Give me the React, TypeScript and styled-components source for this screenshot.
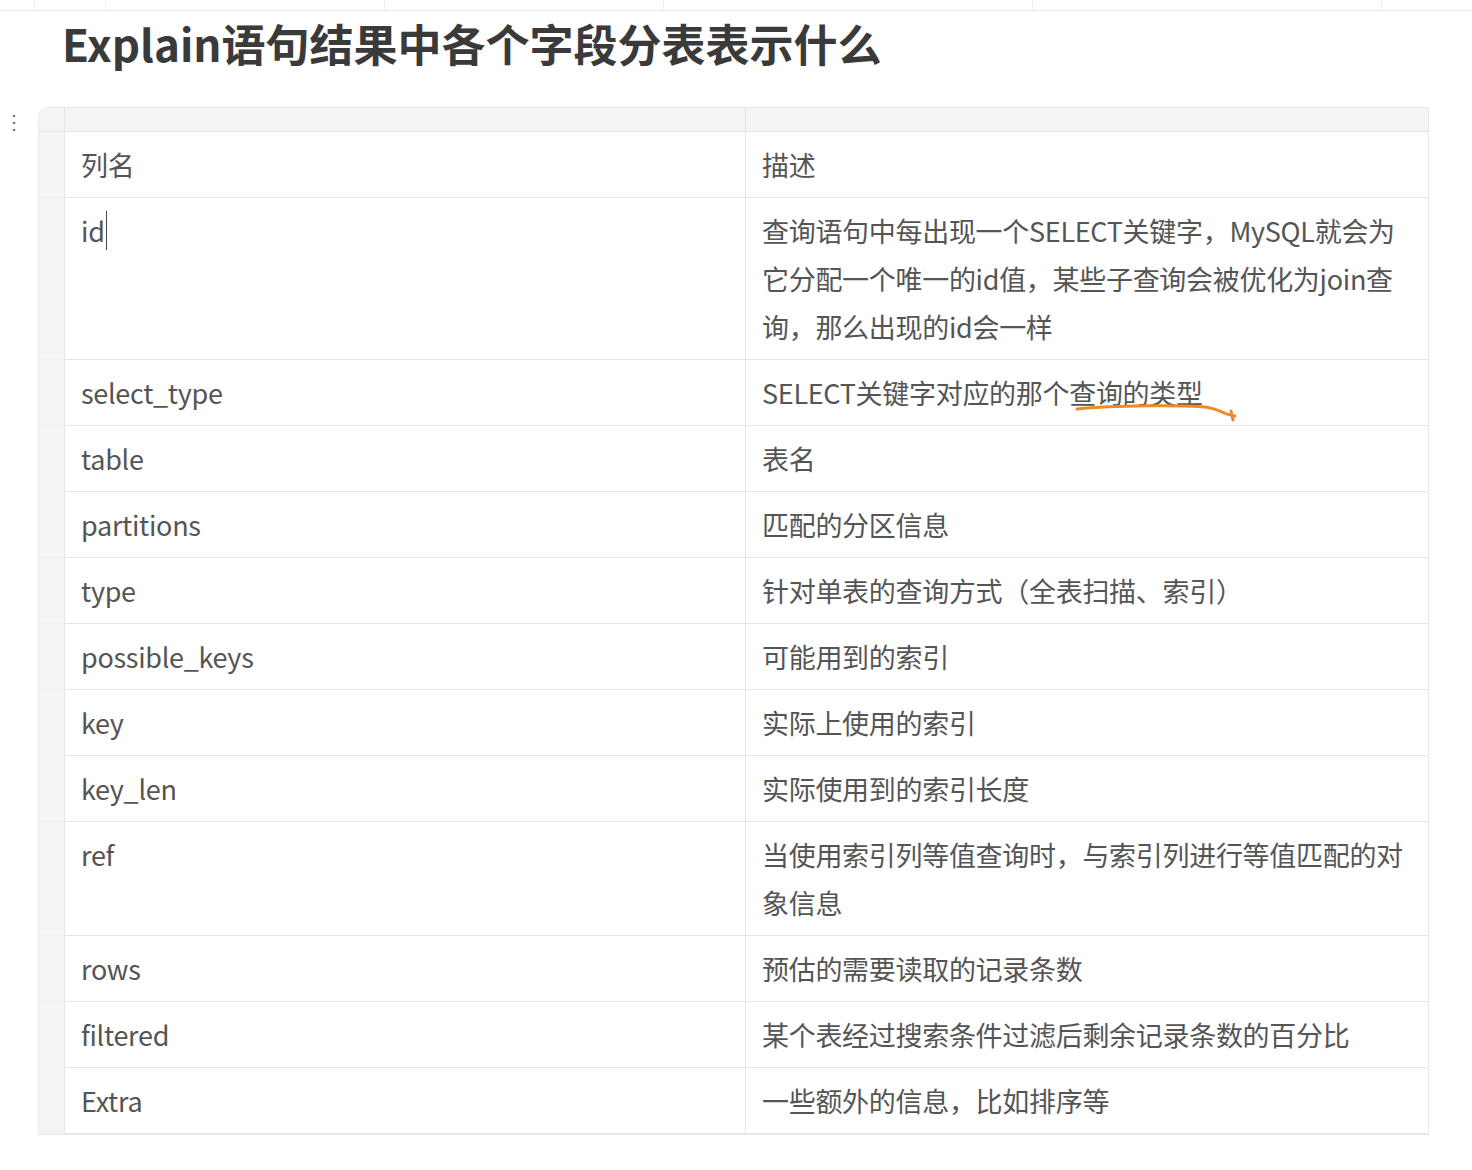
import React from "react";
import styled, { createGlobalStyle } from "styled-components";

const Global = createGlobalStyle`
  body { margin: 0; background: #fff; font-family: "Noto Sans CJK SC", "Noto Sans", sans-serif; }
`;

const Page = styled.div`
  width: 1472px; height: 1170px; position: relative; overflow: hidden; background: #fff;
`;
const TopStrip = styled.div`
  height: 10px; border-bottom: 1px solid #eee; display: flex; padding-left: 34px;
`;
const TopCell = styled.div<{ w: number }>`
  width: ${p => p.w}px; border-left: 1px solid #eee;
`;
const Title = styled.h1`
  margin: 0 0 0 62px; font-size: 44px; font-weight: 700; color: #3a3a3a; line-height: 64px;
  letter-spacing: 0;
`;
const Body = styled.div`
  display: flex; margin-top: 32px;
`;
const Handle = styled.div`
  width: 38px; color: #666; font-size: 20px; line-height: 8px; padding: 10px 0 0 4px; box-sizing: border-box;
`;
const Table = styled.div`
  width: 1389px; border: 1px solid #e6e8ea; border-radius: 10px 0 0 0; overflow: hidden;
  display: grid; grid-template-columns: 26px 681px 1fr;
`;
const Strip = styled.div`
  height: 23px; background: #f3f4f5; border-bottom: 1px solid #e3e5e7;
  border-right: 1px solid #e3e5e7;
`;
const Gutter = styled.div`
  background: #f3f4f5; border-right: 1px solid #e3e5e7; border-bottom: 1px solid #eef0f1;
`;
const Cell = styled.div<{ last?: boolean }>`
  padding: 9px 16px 8px; font-size: 27px; line-height: 48px; color: #555;
  border-bottom: 1px solid #e3e5e7; border-right: ${p => (p.last ? "none" : "1px solid #e3e5e7")};
  letter-spacing: -0.3px; position: relative;
`;
const Mark = styled.span`
  position: relative;
`;
const Stroke = styled.svg`
  position: absolute; left: 6px; top: 32px; overflow: visible;
`;

const rows: [string, React.ReactNode][] = [
  ["列名", "描述"],
  ["id", "查询语句中每出现一个SELECT关键字，MySQL就会为它分配一个唯一的id值，某些子查询会被优化为join查询，那么出现的id会一样"],
  ["select_type", <>SELECT关键字对应的那个<Mark>查询的类型<Stroke width="170" height="14"><path d="M2 4 C40 0 110 0 130 2 C145 4 150 10 160 11 M156 6 L158 15" stroke="#f08a24" strokeWidth="3" fill="none" strokeLinecap="round"/></Stroke></Mark></>],
  ["table", "表名"],
  ["partitions", "匹配的分区信息"],
  ["type", "针对单表的查询方式（全表扫描、索引）"],
  ["possible_keys", "可能用到的索引"],
  ["key", "实际上使用的索引"],
  ["key_len", "实际使用到的索引长度"],
  ["ref", "当使用索引列等值查询时，与索引列进行等值匹配的对象信息"],
  ["rows", "预估的需要读取的记录条数"],
  ["filtered", "某个表经过搜索条件过滤后剩余记录条数的百分比"],
  ["Extra", "一些额外的信息，比如排序等"],
];

export default function App() {
  return (
    <Page>
      <Global />
      <TopStrip>
        <TopCell w={70} /><TopCell w={280} /><TopCell w={280} /><TopCell w={370} /><TopCell w={350} /><TopCell w={90} />
      </TopStrip>
      <Title>Explain语句结果中各个字段分表表示什么</Title>
      <Body>
        <Handle>⋮</Handle>
        <Table>
          <Strip /><Strip /><Strip style={{ borderRight: "none" }} />
          {rows.map(([k, v], i) => (
            <React.Fragment key={i}>
              <Gutter />
              <Cell>{k === "id" ? <>id<span style={{ borderLeft: "1.5px solid #444", marginLeft: 1 }} /></> : k}</Cell>
              <Cell last>{v}</Cell>
            </React.Fragment>
          ))}
        </Table>
      </Body>
    </Page>
  );
}
